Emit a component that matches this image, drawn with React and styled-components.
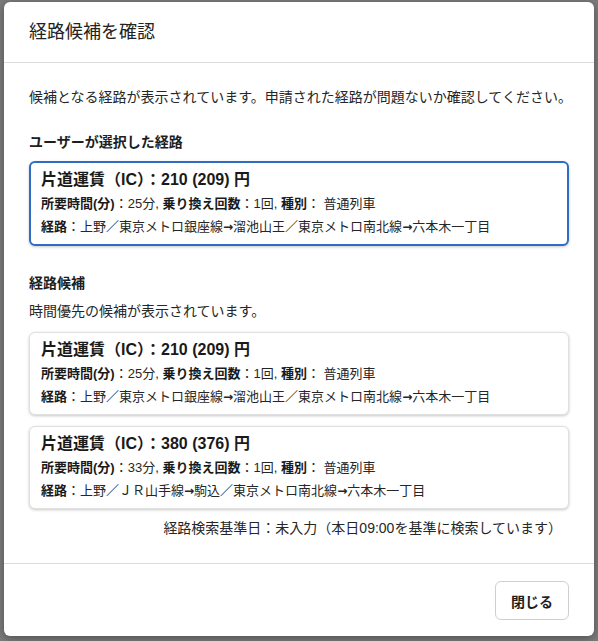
import React from "react";
import styled, { createGlobalStyle } from "styled-components";

const GlobalStyle = createGlobalStyle`
  html, body { margin: 0; padding: 0; }
  body {
    font-family: "Liberation Sans", "Noto Sans CJK JP", sans-serif;
    color: #262626;
    background: #7b7b7b;
  }
  * { box-sizing: border-box; }
`;

const Overlay = styled.div`
  width: 598px;
  height: 641px;
  background: #7b7b7b;
  padding: 2px 4px 0 4px;
  overflow: hidden;
`;

const Modal = styled.div`
  width: 590px;
  background: #fff;
  border-radius: 6px;
  box-shadow: 0 2px 8px rgba(0, 0, 0, 0.35);
  display: flex;
  flex-direction: column;
`;

const Header = styled.div`
  height: 61px;
  padding: 0 25px;
  display: flex;
  align-items: center;
  border-bottom: 1px solid #dcdcdc;
`;

const Title = styled.h2`
  margin: 0;
  font-size: 18px;
  font-weight: 400;
  line-height: 24px;
  color: #222;
  padding-bottom: 1px;
`;

const Body = styled.div`
  padding: 24px 25px 24px 25px;
  display: flex;
  flex-direction: column;
  border-bottom: 1px solid #dcdcdc;
`;

const Text = styled.p`
  margin: ${(p) => p.$mt || 0}px 0 0 0;
  font-size: 14px;
  line-height: 21px;
  color: #262626;
  white-space: nowrap;
  text-align: ${(p) => (p.$right ? "right" : "left")};
  padding-right: ${(p) => (p.$right ? "7px" : "0")};
`;

const SectionTitle = styled.h3`
  margin: ${(p) => p.$mt || 0}px 0 0 0;
  font-size: 14px;
  line-height: 21px;
  font-weight: 700;
  color: #1e1e1e;
`;

const Card = styled.div`
  margin-top: ${(p) => p.$mt || 0}px;
  border: ${(p) => (p.$selected ? "2px solid #2f6cc6" : "1px solid #e0e0e0")};
  border-radius: 6px;
  padding: 5px 11px 5px ${(p) => (p.$selected ? 10 : 11)}px;
  box-shadow: 0 1px 3px rgba(0, 0, 0, 0.22);
  background: #fff;
`;

const Fare = styled.div`
  font-size: 16px;
  line-height: 24px;
  font-weight: 700;
  color: #1a1a1a;
`;

const Detail = styled.div`
  font-size: 13px;
  line-height: 23px;
  color: #262626;
  white-space: nowrap;
`;

const Label = styled.b`
  font-weight: 700;
  color: #1a1a1a;
`;

const Arrow = styled.span`
  font-family: "DejaVu Sans", sans-serif;
  font-size: 12px;
  font-weight: 700;
`;

const Footer = styled.div`
  height: 72px;
  padding: 17px 25px 16px 25px;
  display: flex;
  justify-content: flex-end;
  align-items: flex-start;
`;

const CloseButton = styled.button`
  width: 74px;
  height: 39px;
  border: 1px solid #cfcfcf;
  border-radius: 6px;
  background: #fff;
  font-family: "Liberation Sans", "Noto Sans CJK JP", sans-serif;
  font-size: 14px;
  font-weight: 700;
  color: #1e1e1e;
  cursor: pointer;
`;

function PathText({ path }) {
  const parts = path.split("→");
  return parts.map((p, i) => (
    <React.Fragment key={i}>
      {i > 0 && <Arrow>→</Arrow>}
      {p}
    </React.Fragment>
  ));
}

function RouteCard({ route, selected, mt }) {
  return (
    <Card $selected={selected} $mt={mt}>
      <Fare>片道運賃（IC）：{route.fare} 円</Fare>
      <Detail>
        <Label>所要時間(分)</Label>：{route.minutes}分, <Label>乗り換え回数</Label>：{route.transfers}回,{" "}
        <Label>種別</Label>： {route.kind}
      </Detail>
      <Detail>
        <Label>経路</Label>：<PathText path={route.path} />
      </Detail>
    </Card>
  );
}

const selectedRoute = {
  fare: "210 (209)",
  minutes: 25,
  transfers: 1,
  kind: "普通列車",
  path: "上野／東京メトロ銀座線→溜池山王／東京メトロ南北線→六本木一丁目",
};

const candidates = [
  selectedRoute,
  {
    fare: "380 (376)",
    minutes: 33,
    transfers: 1,
    kind: "普通列車",
    path: "上野／ＪＲ山手線→駒込／東京メトロ南北線→六本木一丁目",
  },
];

export default function App() {
  return (
    <>
      <GlobalStyle />
      <Overlay>
        <Modal>
          <Header>
            <Title>経路候補を確認</Title>
          </Header>
          <Body>
            <Text>候補となる経路が表示されています。申請された経路が問題ないか確認してください。</Text>
            <SectionTitle $mt={24}>ユーザーが選択した経路</SectionTitle>
            <RouteCard route={selectedRoute} selected mt={8} />
            <SectionTitle $mt={27}>経路候補</SectionTitle>
            <Text $mt={7}>時間優先の候補が表示されています。</Text>
            {candidates.map((r, i) => (
              <RouteCard key={i} route={r} mt={i === 0 ? 10 : 11} />
            ))}
            <Text $right $mt={9}>経路検索基準日：未入力（本日09:00を基準に検索しています）</Text>
          </Body>
          <Footer>
            <CloseButton>閉じる</CloseButton>
          </Footer>
        </Modal>
      </Overlay>
    </>
  );
}
